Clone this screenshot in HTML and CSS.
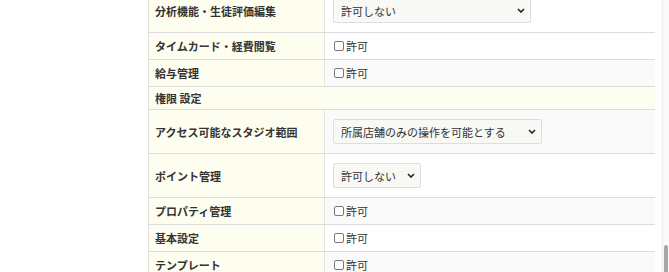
FILE: index.html
```html
<!DOCTYPE html>
<html>
<head>
    <title>権限設定</title>
    <link rel="stylesheet" href="styles.css">
</head>
<body>
    <div class="page">
        <table class="settings">
            <tr class="row-select">
                <th>分析機能・生徒評価編集</th>
                <td class="white">
                    <span class="select-wrap w1">
                        <select><option>許可しない</option></select>
                        <svg class="chev" viewBox="0 0 8 5" width="8" height="5"><path d="M1 1 L4 4 L7 1" /></svg>
                    </span>
                </td>
            </tr>
            <tr class="row-check">
                <th>タイムカード・経費閲覧</th>
                <td class="white"><label><input type="checkbox">許可</label></td>
            </tr>
            <tr class="row-check">
                <th>給与管理</th>
                <td class="grey"><label><input type="checkbox">許可</label></td>
            </tr>
            <tr class="row-head">
                <th colspan="2">権限 設定</th>
            </tr>
            <tr class="row-select">
                <th>アクセス可能なスタジオ範囲</th>
                <td class="grey">
                    <span class="select-wrap w2">
                        <select><option>所属店舗のみの操作を可能とする</option></select>
                        <svg class="chev" viewBox="0 0 8 5" width="8" height="5"><path d="M1 1 L4 4 L7 1" /></svg>
                    </span>
                </td>
            </tr>
            <tr class="row-select">
                <th>ポイント管理</th>
                <td class="white">
                    <span class="select-wrap w3">
                        <select><option>許可しない</option></select>
                        <svg class="chev" viewBox="0 0 8 5" width="8" height="5"><path d="M1 1 L4 4 L7 1" /></svg>
                    </span>
                </td>
            </tr>
            <tr class="row-check">
                <th>プロパティ管理</th>
                <td class="grey"><label><input type="checkbox">許可</label></td>
            </tr>
            <tr class="row-check">
                <th>基本設定</th>
                <td class="white"><label><input type="checkbox">許可</label></td>
            </tr>
            <tr class="row-check">
                <th>テンプレート</th>
                <td class="grey"><label><input type="checkbox">許可</label></td>
            </tr>
        </table>
    </div>
    <div class="scrollbar"><div class="thumb"></div></div>
</body>
</html>
```

FILE: styles.css
```css
html, body {
    margin: 0;
    padding: 0;
    background: #fff;
    overflow: hidden;
}

body {
    font-family: "Noto Sans CJK JP", "Noto Sans", sans-serif;
    font-size: 11px;
    color: #333;
}

.page {
    padding-left: 148px;
    margin-top: -11px;
}

.settings {
    width: 507px;
    border-collapse: collapse;
    border-left: 1px solid #e2e2dc;
}

.settings th,
.settings td {
    border-bottom: 1px solid #dcdcdc;
    padding: 0;
    line-height: 14px;
}

.settings th {
    width: 169px;
    text-align: left;
    font-weight: bold;
    padding-left: 6px;
    background: #fdfdf0;
    border-right: 1px solid #e6e6da;
}

.settings td {
    padding-left: 8px;
}

.row-check th,
.row-check td {
    height: 26px;
}

.row-select th,
.row-select td {
    height: 43px;
}

.row-head th {
    height: 22px;
    border-right: none;
}

.white {
    background: #fff;
}

.grey {
    background: #fafafa;
}

label {
    display: flex;
    align-items: center;
}

input[type="checkbox"] {
    appearance: none;
    width: 10px;
    height: 10px;
    margin: 0 2px 0 1px;
    border: 1px solid #777;
    border-radius: 2px;
    background: #fff;
}

.select-wrap {
    position: relative;
    display: inline-block;
    vertical-align: middle;
}

.select-wrap select {
    appearance: none;
    display: block;
    height: 25px;
    padding: 0 0 0 7px;
    font-family: inherit;
    font-size: 11px;
    color: #333;
    background: #f8f8f4;
    border: 1px solid #dedede;
    border-radius: 2px;
}

.w1 select { width: 198px; }
.w2 select { width: 209px; }
.w3 select { width: 88px; }

.chev {
    position: absolute;
    right: 6px;
    top: 10px;
    fill: none;
    stroke: #222;
    stroke-width: 1.6;
    pointer-events: none;
}

.scrollbar {
    position: fixed;
    top: 0;
    right: 0;
    width: 6px;
    height: 100%;
    background: #fafafa;
    border-left: 1px solid #efefef;
}

.thumb {
    position: absolute;
    left: 1px;
    bottom: 0;
    width: 4px;
    height: 27px;
    background: #a8a8a8;
    border-radius: 2px 2px 0 0;
}
```
